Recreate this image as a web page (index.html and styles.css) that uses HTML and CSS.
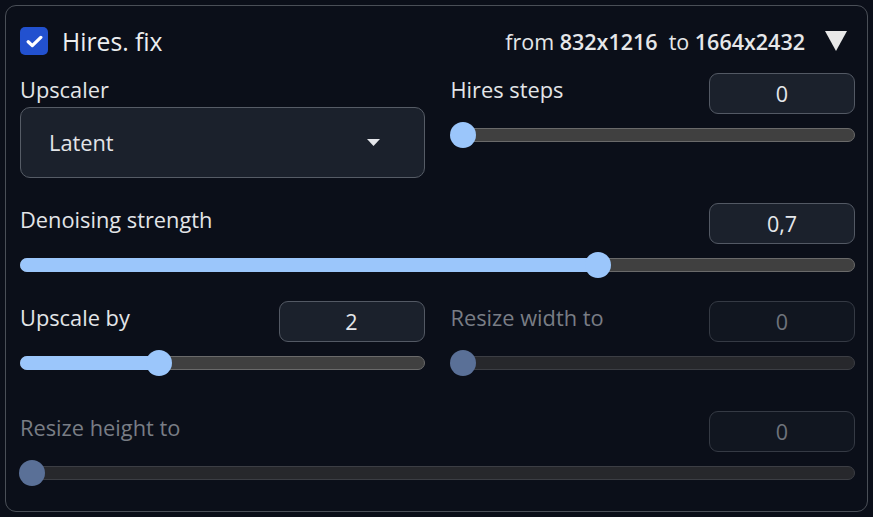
FILE: index.html
```html
<!DOCTYPE html>
<html>
<head>
<meta charset="utf-8">
<link rel="stylesheet" href="styles.css">
</head>
<body>
<div class="panel">
  <div class="header">
    <label class="check">
      <span class="box"><svg width="17" height="13" viewBox="0 0 17 13"><path d="M2.2 6.8 L6.3 10.6 L14.8 2.4" fill="none" stroke="#fff" stroke-width="3.3" stroke-linecap="round" stroke-linejoin="round"/></svg></span>
      <span class="title">Hires. fix</span>
    </label>
    <div class="info">
      <span>from <b>832x1216</b></span>
      <span>to <b>1664x2432</b></span>
      <svg class="tri" width="24" height="22" viewBox="0 0 24 22"><path d="M1 1 L23 1 L12 21 Z" fill="#e8e8e8"/></svg>
    </div>
  </div>

  <div class="row two r1">
    <div class="col">
      <div class="label">Upscaler</div>
      <div class="dropdown">
        <span>Latent</span>
        <svg width="13" height="7" viewBox="0 0 13 7"><path d="M0 0 L13 0 L6.5 7 Z" fill="#e5e7eb"/></svg>
      </div>
    </div>
    <div class="slider-block">
      <div class="top"><span class="label">Hires steps</span><div class="num">0</div></div>
      <div class="track" style="--v:0"><div class="fill"></div><div class="thumb"></div></div>
    </div>
  </div>

  <div class="row r2">
    <div class="slider-block">
      <div class="top"><span class="label">Denoising strength</span><div class="num">0,7</div></div>
      <div class="track" style="--v:0.698"><div class="fill"></div><div class="thumb"></div></div>
    </div>
  </div>

  <div class="row two r3">
    <div class="slider-block">
      <div class="top"><span class="label">Upscale by</span><div class="num">2</div></div>
      <div class="track" style="--v:0.3333"><div class="fill"></div><div class="thumb"></div></div>
    </div>
    <div class="slider-block disabled">
      <div class="top"><span class="label">Resize width to</span><div class="num">0</div></div>
      <div class="track" style="--v:0"><div class="fill"></div><div class="thumb"></div></div>
    </div>
  </div>

  <div class="row r4">
    <div class="slider-block disabled">
      <div class="top"><span class="label">Resize height to</span><div class="num">0</div></div>
      <div class="track" style="--v:0"><div class="fill"></div><div class="thumb"></div></div>
    </div>
  </div>
</div>
</body>
</html>
```

FILE: styles.css
```css
* { box-sizing: border-box; }
html, body {
  margin: 0;
  padding: 0;
  background: #0b0f19;
}
body {
  font-family: "Open Sans", "Noto Sans", sans-serif;
  color: #e3e5e8;
  width: 873px;
  height: 517px;
  overflow: hidden;
}
.panel {
  margin: 5px;
  border: 1px solid #4a4f57;
  border-radius: 11px;
  background: #0b0f19;
  padding: 14px 12px 30px 14px;
  height: 507px;
}
.header {
  height: 42px;
  display: flex;
  align-items: center;
  justify-content: space-between;
}
.check {
  display: flex;
  align-items: center;
  gap: 14px;
}
.box {
  width: 28px;
  height: 28px;
  border-radius: 5px;
  background: #2251cf;
  display: flex;
  align-items: center;
  justify-content: center;
}
.title {
  font-size: 24.7px;
  color: #eceef0;
}
.info {
  display: flex;
  align-items: center;
  gap: 11px;
  font-size: 21.5px;
  color: #e6e7e9;
  margin-right: 7px;
}
.info b { font-weight: 600; }
.info .tri { margin-left: 8px; }

.row { display: grid; grid-template-columns: 1fr; }
.row.two { grid-template-columns: 1fr 1fr; column-gap: 26px; }
.r1 { margin-top: 11px; height: 105px; }
.r2 { margin-top: 25px; }
.r3 { margin-top: 29px; }
.r4 { margin-top: 41px; }

.label {
  font-size: 21.8px;
  line-height: 27px;
}
.col .label { margin-top: 3px; }
.dropdown {
  margin-top: 4px;
  height: 71px;
  border: 1px solid #565c66;
  border-radius: 10px;
  background: #1b212c;
  display: flex;
  align-items: center;
  justify-content: space-between;
  padding: 0 44px 0 28px;
  font-size: 21.8px;
}

.slider-block { height: 69px; display: flex; flex-direction: column; }
.top {
  display: flex;
  justify-content: space-between;
  align-items: flex-start;
  height: 41px;
}
.top .label { padding-top: 3px; }
.num {
  width: 146px;
  height: 41px;
  border: 1px solid #535964;
  border-radius: 9px;
  background: #1b212c;
  display: flex;
  align-items: center;
  justify-content: center;
  font-size: 21.5px;
  color: #e5e7eb;
}
.track {
  margin-top: 14px;
  height: 14px;
  border-radius: 7px;
  background: #404040;
  border: 1px solid #6a6a6a;
  position: relative;
}
.fill {
  position: absolute;
  left: -1px;
  top: -1px;
  bottom: -1px;
  width: calc(12px + (100% - 24px) * var(--v));
  background: #9bc6fb;
  border-radius: 7px 0 0 7px;
}
.thumb {
  position: absolute;
  top: 50%;
  left: calc(11px + (100% - 22px) * var(--v));
  width: 26px;
  height: 26px;
  border-radius: 50%;
  background: #9bc6fb;
  transform: translate(-50%, -50%);
}
.disabled .label { color: #797d85; }
.disabled .num {
  background: #111620;
  border-color: #353a44;
  color: #6e737c;
}
.disabled .track {
  background: #27282c;
  border-color: #3c3e44;
}
.disabled .fill { display: none; }
.disabled .thumb { background: #5a7097; }
```
